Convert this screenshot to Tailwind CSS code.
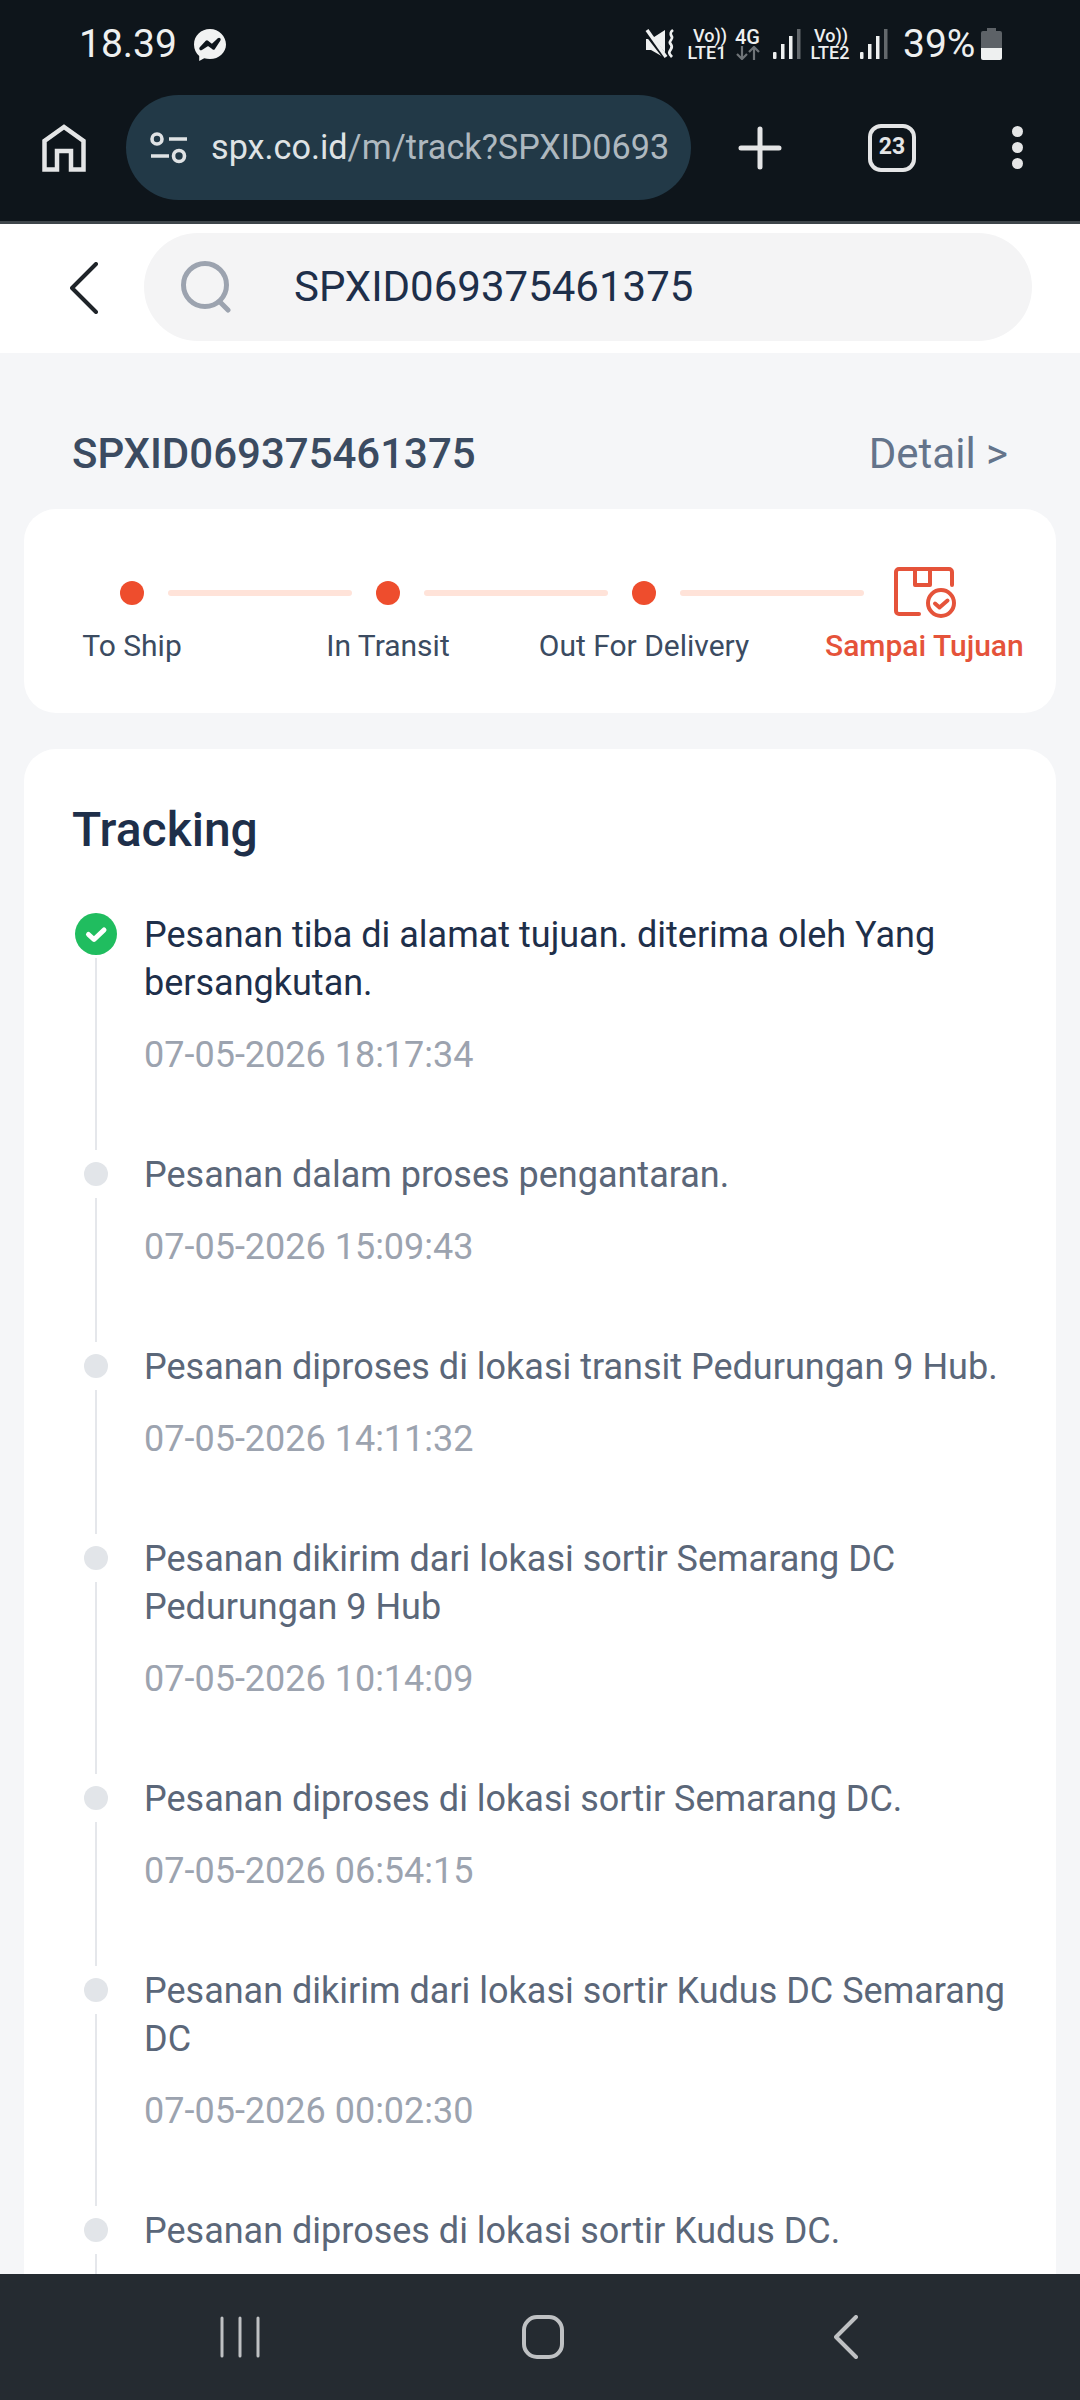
<!DOCTYPE html>
<html lang="en">
<head>
    <meta charset="UTF-8">
    <meta name="viewport" content="width=device-width, initial-scale=1.0">
    <title>SPX Tracking</title>
    <script src="https://cdn.jsdelivr.net/npm/@tailwindcss/browser@4"></script>
</head>
<body class="bg-[#f5f6f8] font-['Roboto',sans-serif]">
    <div class="flex flex-col h-[2400px] w-[1080px] overflow-hidden">
        <!-- Status bar + browser toolbar -->
        <div class="h-[224px] shrink-0 bg-[#0e151b] border-b-[3px] border-[#3f464b]">
            <div class="flex items-center h-[95px] pl-[79px] pr-[78px] pb-[7px] text-[#eef0f0]">
                <span class="text-[39px] leading-none">18.39</span>
                <svg class="ml-[16px] mt-[2px]" width="34" height="34" viewBox="0 0 34 34"><path fill="#f1f2f2" d="M17 1C8 1 1 7.700 1 16.500c0 4.700 2 8.700 5.200 11.400V33l5-2.700c1.800.5 3.700.8 5.800.8 9 0 16-6.700 16-14.600S26 1 17 1z"/><path fill="none" stroke="#0e151b" stroke-width="3.400" stroke-linejoin="round" d="M8 20.500l6-6.500 5 4 7-6.500-5.500 8.500-5.500-4z"/></svg>
                <div class="ml-auto flex items-center h-[40px]">
                    <svg width="30" height="32" viewBox="0 0 30 32"><path fill="#eef0f0" d="M1 11h5l14-9v28L6 22H1z"/><path stroke="#0e151b" stroke-width="5" d="M0 3l21 27"/><path stroke="#eef0f0" stroke-width="3.500" d="M2 2l19 27"/><path fill="none" stroke="#eef0f0" stroke-width="2.800" d="M28 2c-4 3 -2 5 -1 7s-3 4 -2 6 3 3 1 6-3 4 1 8"/></svg>
                    <div class="ml-[12px] flex flex-col items-center font-medium text-[18px] leading-[17px] w-[40px] whitespace-nowrap"><span class="pl-[6px]">Vo))</span><span>LTE1</span></div>
                    <div class="ml-[8px] flex flex-col items-center w-[25px]">
                        <span class="font-medium text-[20px] leading-[18px]">4G</span>
                        <svg width="24" height="14" viewBox="0 0 24 14"><g fill="none" stroke="#6f7478" stroke-width="2.200"><path d="M6 0v13M1 8l5 5 5-5"/><path d="M18 14V1M13 6l5-5 5 5"/></g></svg>
                    </div>
                    <svg class="ml-[13px]" width="28" height="30" viewBox="0 0 28 30"><rect x="0" y="23" width="3.500" height="7" rx="1" fill="#eef0f0"/><rect x="8" y="15" width="3.500" height="15" fill="#eef0f0"/><rect x="16" y="7" width="3.500" height="23" fill="#eef0f0"/><rect x="24" y="0" width="3.500" height="30" fill="#63686c"/></svg>
                    <div class="ml-[9px] flex flex-col items-center font-medium text-[18px] leading-[17px] w-[40px] whitespace-nowrap"><span class="pl-[2px]">Vo))</span><span>LTE2</span></div>
                    <svg class="ml-[10px]" width="28" height="30" viewBox="0 0 28 30"><rect x="0" y="23" width="3.500" height="7" rx="1" fill="#eef0f0"/><rect x="8" y="15" width="3.500" height="15" fill="#eef0f0"/><rect x="16" y="7" width="3.500" height="23" fill="#eef0f0"/><rect x="24" y="0" width="3.500" height="30" fill="#63686c"/></svg>
                    <span class="ml-[15px] w-[71px] text-[39px] leading-none whitespace-nowrap">39%</span>
                    <svg class="ml-[7px]" width="21" height="32" viewBox="0 0 21 32"><path fill="#5d6267" d="M6 0h9v3h4a2 2 0 0 1 2 2v16H0V5a2 2 0 0 1 2-2h4z"/><path fill="#eef0f0" d="M0 20h21v10a2 2 0 0 1-2 2H2a2 2 0 0 1-2-2z"/></svg>
                </div>
            </div>
            <div class="flex items-center h-[105px]">
                <svg class="ml-[42px]" width="44" height="48" viewBox="0 0 44 48"><path fill="none" stroke="#e4e5e6" stroke-width="4.500" d="M2.500 45.500V17L22 3l19.500 14v28.500H29V27H15v18.500z"/></svg>
                <div class="ml-[40px] w-[565px] h-[105px] rounded-full bg-[#223947] flex items-center pl-[23px]">
                    <svg width="40" height="34" viewBox="0 0 40 34"><g fill="none" stroke="#e0e3e5" stroke-width="3.600"><circle cx="8" cy="8" r="5"/><circle cx="30" cy="25" r="5.500"/><path d="M20 8h18M2 25h18"/></g></svg>
                    <span class="ml-[22px] text-[34.2px] leading-none whitespace-nowrap text-[#aeb8bf]"><span class="text-[#dfe3e5]">spx.co.id</span>/m/track?SPXID0693</span>
                </div>
                <svg class="ml-[47px]" width="44" height="44" viewBox="0 0 44 44"><path stroke="#e4e5e6" stroke-width="5" stroke-linecap="round" d="M22 3v38M3 22h38"/></svg>
                <div class="ml-[86px] w-[48px] h-[48px] rounded-[13px] border-[4px] border-[#e4e5e6] flex items-center justify-center text-[23px] font-bold text-[#e4e5e6]">23</div>
                <div class="ml-[96px] flex flex-col gap-[5px]">
                    <div class="w-[11px] h-[11px] rounded-full bg-[#e4e5e6]"></div>
                    <div class="w-[11px] h-[11px] rounded-full bg-[#e4e5e6]"></div>
                    <div class="w-[11px] h-[11px] rounded-full bg-[#e4e5e6]"></div>
                </div>
            </div>
        </div>

        <!-- Search header -->
        <div class="h-[129px] shrink-0 bg-white flex items-start pt-[9px] pl-[70px]">
            <svg class="mt-[29px]" width="28" height="52" viewBox="0 0 28 52"><path fill="none" stroke="#1f2429" stroke-width="4" stroke-linecap="round" stroke-linejoin="round" d="M26 2L2 26l24 24"/></svg>
            <div class="ml-[46px] w-[888px] h-[108px] rounded-full bg-[#f4f4f5] flex items-center pl-[37px]">
                <svg width="52" height="52" viewBox="0 0 52 52"><g fill="none" stroke="#9ca3af" stroke-width="5" stroke-linecap="round"><circle cx="24" cy="24" r="21.500"/><path d="M39 41l8 8"/></g></svg>
                <span class="ml-[61px] mb-[2px] text-[42px] text-[#1e2f4a]">SPXID069375461375</span>
            </div>
        </div>

        <!-- Main -->
        <div class="flex-1 min-h-0 overflow-hidden">
            <div class="flex items-center justify-between h-[156px] pt-[44px] pl-[72px] pr-[72px]">
                <span class="text-[42px] font-medium text-[#3b4b61]">SPXID069375461375</span>
                <span class="text-[42px] text-[#64748b]">Detail &gt;</span>
            </div>

            <!-- Steps -->
            <div class="mx-[24px] h-[204px] rounded-[32px] bg-white pt-[60px]">
                <div class="flex items-center h-[48px] pl-[96px]">
                    <div class="w-6 h-6 rounded-full bg-[#ee4d2d]"></div>
                    <div class="ml-6 w-[184px] h-[6px] rounded-full bg-[#ffe3d9]"></div>
                    <div class="ml-6 w-6 h-6 rounded-full bg-[#ee4d2d]"></div>
                    <div class="ml-6 w-[184px] h-[6px] rounded-full bg-[#ffe3d9]"></div>
                    <div class="ml-6 w-6 h-6 rounded-full bg-[#ee4d2d]"></div>
                    <div class="ml-6 w-[184px] h-[6px] rounded-full bg-[#ffe3d9]"></div>
                    <svg class="ml-[29px] shrink-0" width="64" height="52" viewBox="0 0 64 52"><g fill="none" stroke="#e5533a" stroke-width="4" stroke-linecap="round" stroke-linejoin="round"><path d="M26 47H6a3 3 0 0 1-3-3V5a3 3 0 0 1 3-3h50a3 3 0 0 1 3 3v13"/><path d="M22 3v15h15V3"/><circle cx="48" cy="36" r="13"/><path d="M42 36.500l4.500 4 8-7"/></g></svg>
                </div>
                <div class="flex mt-[9px] text-[30px] leading-[40px] text-[#3b4b61] whitespace-nowrap">
                    <div class="w-[216px] text-center">To Ship</div>
                    <div class="w-[296px] text-center">In Transit</div>
                    <div class="w-[216px] text-center">Out For Delivery</div>
                    <div class="ml-[73px] font-medium text-[#e5533a]">Sampai Tujuan</div>
                </div>
            </div>

            <!-- Tracking -->
            <div class="mx-[24px] mt-[36px] rounded-[32px] bg-white pt-[52px] pl-[48px] pr-[49px]">
                <h2 class="text-[48px] leading-[58px] font-medium text-[#1e2f4a] mb-[51px]">Tracking</h2>

                <div class="flex">
                    <div class="flex flex-col items-center w-12 shrink-0">
                        <div class="h-12 flex items-center">
                            <svg width="42" height="42" viewBox="0 0 42 42"><circle cx="21" cy="21" r="21" fill="#20bd5f"/><path fill="none" stroke="#fff" stroke-width="5" stroke-linecap="round" stroke-linejoin="round" d="M13.500 21.500l5.500 5 10-9.500"/></svg>
                        </div>
                        <div class="flex-1 w-[2px] bg-[#e5e7eb]"></div>
                    </div>
                    <div class="ml-6 pt-px pb-[71px]">
                        <p class="text-[36px] leading-[48px] text-[#1e2f4a]">Pesanan tiba di alamat tujuan. diterima oleh Yang bersangkutan.</p>
                        <p class="mt-6 text-[36px] leading-[48px] text-[#9ca3af]">07-05-2026 18:17:34</p>
                    </div>
                </div>

                <div class="flex">
                    <div class="flex flex-col items-center w-12 shrink-0">
                        <div class="h-12 flex items-center"><div class="w-6 h-6 rounded-full bg-[#e2e5e9]"></div></div>
                        <div class="flex-1 w-[2px] bg-[#e5e7eb]"></div>
                    </div>
                    <div class="ml-6 pt-px pb-[71px]">
                        <p class="text-[36px] leading-[48px] text-[#5b6779]">Pesanan dalam proses pengantaran.</p>
                        <p class="mt-6 text-[36px] leading-[48px] text-[#9ca3af]">07-05-2026 15:09:43</p>
                    </div>
                </div>

                <div class="flex">
                    <div class="flex flex-col items-center w-12 shrink-0">
                        <div class="h-12 flex items-center"><div class="w-6 h-6 rounded-full bg-[#e2e5e9]"></div></div>
                        <div class="flex-1 w-[2px] bg-[#e5e7eb]"></div>
                    </div>
                    <div class="ml-6 pt-px pb-[71px]">
                        <p class="text-[36px] leading-[48px] text-[#5b6779]">Pesanan diproses di lokasi transit Pedurungan 9 Hub.</p>
                        <p class="mt-6 text-[36px] leading-[48px] text-[#9ca3af]">07-05-2026 14:11:32</p>
                    </div>
                </div>

                <div class="flex">
                    <div class="flex flex-col items-center w-12 shrink-0">
                        <div class="h-12 flex items-center"><div class="w-6 h-6 rounded-full bg-[#e2e5e9]"></div></div>
                        <div class="flex-1 w-[2px] bg-[#e5e7eb]"></div>
                    </div>
                    <div class="ml-6 pt-px pb-[71px]">
                        <p class="text-[36px] leading-[48px] text-[#5b6779]">Pesanan dikirim dari lokasi sortir Semarang DC Pedurungan 9 Hub</p>
                        <p class="mt-6 text-[36px] leading-[48px] text-[#9ca3af]">07-05-2026 10:14:09</p>
                    </div>
                </div>

                <div class="flex">
                    <div class="flex flex-col items-center w-12 shrink-0">
                        <div class="h-12 flex items-center"><div class="w-6 h-6 rounded-full bg-[#e2e5e9]"></div></div>
                        <div class="flex-1 w-[2px] bg-[#e5e7eb]"></div>
                    </div>
                    <div class="ml-6 pt-px pb-[71px]">
                        <p class="text-[36px] leading-[48px] text-[#5b6779]">Pesanan diproses di lokasi sortir Semarang DC.</p>
                        <p class="mt-6 text-[36px] leading-[48px] text-[#9ca3af]">07-05-2026 06:54:15</p>
                    </div>
                </div>

                <div class="flex">
                    <div class="flex flex-col items-center w-12 shrink-0">
                        <div class="h-12 flex items-center"><div class="w-6 h-6 rounded-full bg-[#e2e5e9]"></div></div>
                        <div class="flex-1 w-[2px] bg-[#e5e7eb]"></div>
                    </div>
                    <div class="ml-6 pt-px pb-[71px]">
                        <p class="text-[36px] leading-[48px] text-[#5b6779]">Pesanan dikirim dari lokasi sortir Kudus DC Semarang DC</p>
                        <p class="mt-6 text-[36px] leading-[48px] text-[#9ca3af]">07-05-2026 00:02:30</p>
                    </div>
                </div>

                <div class="flex">
                    <div class="flex flex-col items-center w-12 shrink-0">
                        <div class="h-12 flex items-center"><div class="w-6 h-6 rounded-full bg-[#e2e5e9]"></div></div>
                        <div class="flex-1 w-[2px] bg-[#e5e7eb]"></div>
                    </div>
                    <div class="ml-6 pt-px pb-[71px]">
                        <p class="text-[36px] leading-[48px] text-[#5b6779]">Pesanan diproses di lokasi sortir Kudus DC.</p>
                    </div>
                </div>
            </div>
        </div>

        <!-- Android nav bar -->
        <div class="h-[126px] shrink-0 bg-[#252b31] flex items-center justify-center pl-[6px]">
            <div class="w-[303px] flex justify-center">
                <svg width="40" height="42" viewBox="0 0 40 42"><path stroke="#bfc1c3" stroke-width="3" stroke-linecap="round" d="M2 2v38M20 2v38M38 2v38"/></svg>
            </div>
            <div class="w-[303px] flex justify-center">
                <svg width="42" height="44" viewBox="0 0 42 44"><rect x="2" y="2" width="38" height="40" rx="13" fill="none" stroke="#bfc1c3" stroke-width="4"/></svg>
            </div>
            <div class="w-[303px] flex justify-center">
                <svg width="24" height="44" viewBox="0 0 24 44"><path fill="none" stroke="#bfc1c3" stroke-width="4" stroke-linecap="round" stroke-linejoin="round" d="M22 2L2 22l20 20"/></svg>
            </div>
        </div>
    </div>
</body>
</html>
